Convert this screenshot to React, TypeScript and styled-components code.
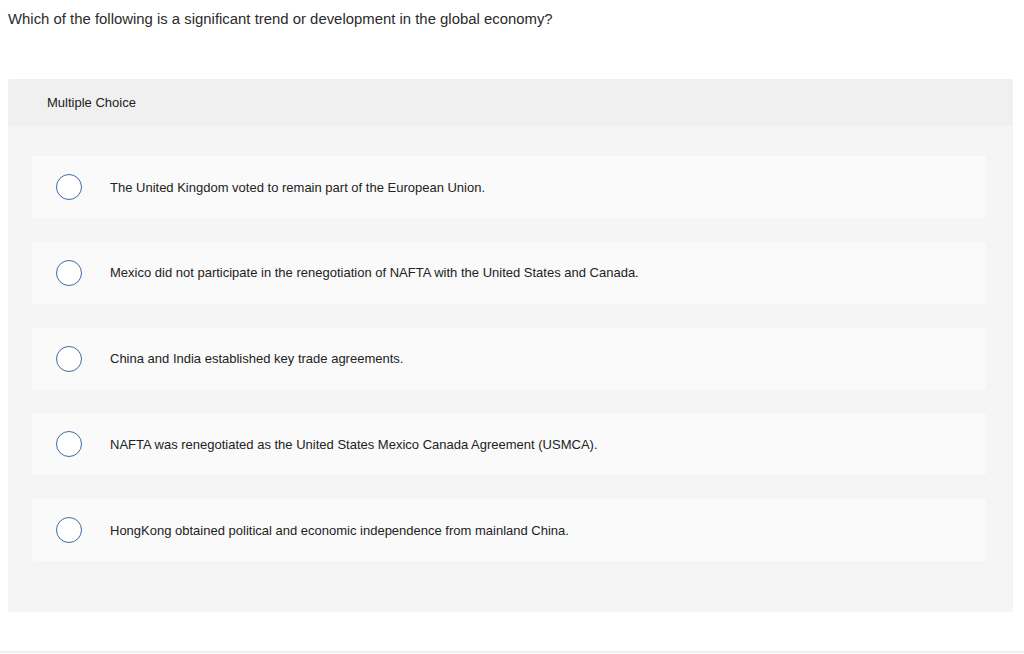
import React from "react"
import styled, { createGlobalStyle } from "styled-components"

const GlobalStyle = createGlobalStyle`
  html, body {
    margin: 0;
    padding: 0;
    background: #ffffff;
  }
  body {
    font-family: "Liberation Sans", Arial, sans-serif;
    color: #222222;
  }
`

const options = [
  "The United Kingdom voted to remain part of the European Union.",
  "Mexico did not participate in the renegotiation of NAFTA with the United States and Canada.",
  "China and India established key trade agreements.",
  "NAFTA was renegotiated as the United States Mexico Canada Agreement (USMCA).",
  "HongKong obtained political and economic independence from mainland China.",
]

const App: React.FC = () => {
  return (
    <>
      <GlobalStyle />
      <StyledPage>
        <StyledQuestion>
          {"Which of the following is a significant trend or development in the global economy?"}
        </StyledQuestion>
        <StyledPanel>
          <StyledHeader>{"Multiple Choice"}</StyledHeader>
          <StyledOptions>
            {options.map((text) => (
              <StyledOption key={text}>
                <StyledRadio />
                <StyledOptionText>{text}</StyledOptionText>
              </StyledOption>
            ))}
          </StyledOptions>
        </StyledPanel>
      </StyledPage>
      <StyledRule />
    </>
  )
}

const StyledPage = styled.div`
  display: flex;
  flex-direction: column;
  padding: 10px 11px 0 8px;
  height: 641px;
  box-sizing: border-box;
`

const StyledQuestion = styled.div`
  font-size: 14.9px;
  line-height: 18px;
  color: #2b2b2b;
  margin-bottom: 51px;
`

const StyledPanel = styled.div`
  display: flex;
  flex-direction: column;
  background: #f5f5f5;
  border-radius: 3px;
  overflow: hidden;
`

const StyledHeader = styled.div`
  display: flex;
  align-items: center;
  height: 47px;
  padding-left: 39px;
  background: #f0f0f0;
  font-size: 13px;
  color: #222222;
`

const StyledOptions = styled.div`
  display: flex;
  flex-direction: column;
  gap: 23.75px;
  padding: 30px 27px 51px 24px;
`

const StyledOption = styled.div`
  display: flex;
  align-items: center;
  height: 62px;
  padding-left: 24px;
  background: #fafafa;
  border-radius: 2px;
`

const StyledRadio = styled.span`
  width: 26px;
  height: 26px;
  box-sizing: border-box;
  border: 1px solid #3d6aa3;
  border-radius: 50%;
  background: #ffffff;
  flex-shrink: 0;
`

const StyledOptionText = styled.span`
  margin-left: 28px;
  font-size: 13px;
  color: #222222;
`

const StyledRule = styled.div`
  height: 2px;
  margin-top: 10px;
  background: #eeeeee;
`

export default App
